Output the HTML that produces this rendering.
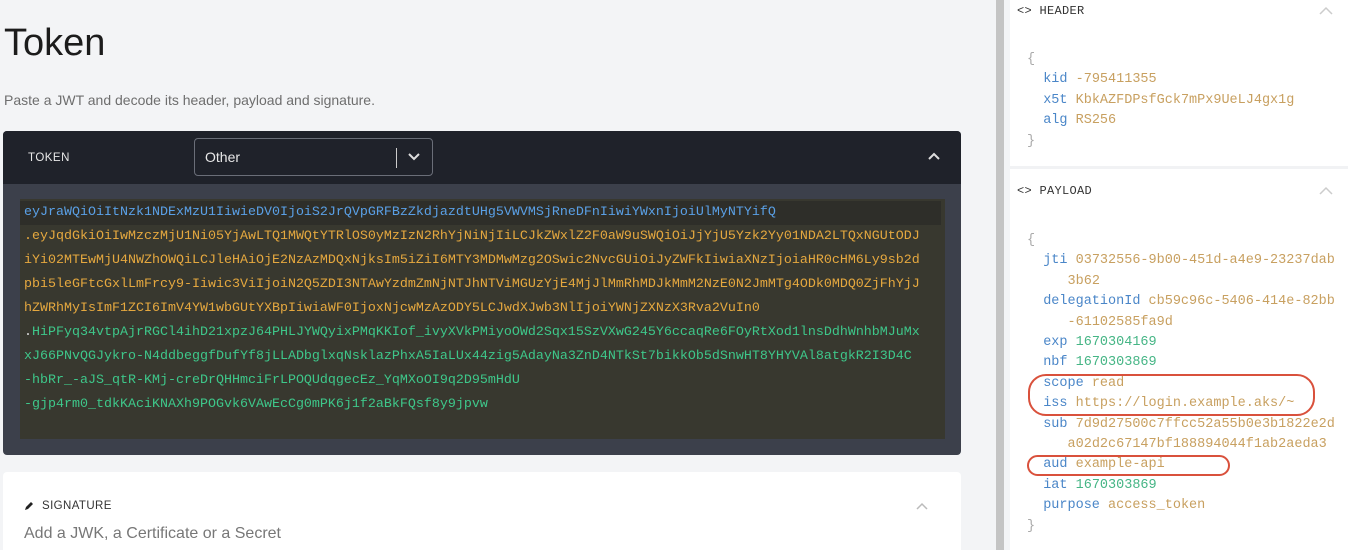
<!DOCTYPE html>
<html style="overflow:hidden;height:550px"><head><meta charset="utf-8"><style>
*{box-sizing:border-box;margin:0;padding:0}
body{width:1348px;height:550px;overflow:hidden;background:#f3f4f6;font-family:"Liberation Sans",sans-serif;position:relative}
.mono{font-family:"Liberation Mono",monospace}
h1{position:absolute;left:4px;top:22px;font-size:38px;font-weight:400;color:#1c1c1c}
.sub{position:absolute;left:4px;top:92px;font-size:14px;color:#6e6e6e}
.card{position:absolute;left:3px;top:131px;width:958px;height:324px;background:#3c404b;border-radius:4px;overflow:hidden}
.chead{height:53px;background:#1f222a;position:relative}
.lbl{position:absolute;left:25px;top:21px;font-size:11.5px;color:#e8e8e8;letter-spacing:.5px}
.sel{position:absolute;left:191px;top:7px;width:239px;height:38px;border:1px solid #6a6e78;border-radius:4px;color:#e8e8e8;font-size:14px;padding:10px 10px}
.sel .bar{position:absolute;left:201px;top:9px;width:1px;height:20px;background:#ccc}
.ta{position:absolute;left:17px;top:68px;width:925px;height:240px;background:#38382f}
.line{position:absolute;left:4px;font-size:13.33px;white-space:nowrap;height:24px;line-height:24px}
.b{color:#5aa0e6}.o{color:#e5a83f}.g{color:#3ec78a}
.sig{position:absolute;left:3px;top:472px;width:958px;height:78px;background:#fff;border-radius:4px 4px 0 0}
.rp{position:absolute;left:1010px;top:0;width:338px;height:550px;background:#fff}
.sb{position:absolute;left:996px;top:0;width:8px;height:550px;background:#c4c4c4}
.sbt{position:absolute;left:988px;top:0;width:22px;height:550px;background:#f3f4f6}
.ttl{position:absolute;font-size:12px;color:#333;letter-spacing:.3px}
.json{position:absolute;left:1027px;font-size:13.5px;line-height:20.4px;white-space:pre;color:#aaa}
.k{color:#4a86c8}.v{color:#c8a060}.n{color:#45b585}
.oval{position:absolute;border:2px solid #d9513c;border-radius:18px}
</style></head><body>
<h1>Token</h1>
<div class="sub">Paste a JWT and decode its header, payload and signature.</div>
<div class="card">
 <div class="chead"><div class="lbl">TOKEN</div>
  <div class="sel">Other<div class="bar"></div>
   <svg style="position:absolute;left:212px;top:13px" width="14" height="10" viewBox="0 0 14 10"><path d="M2 2l5 5 5-5" stroke="#ddd" stroke-width="2" fill="none"/></svg></div>
  <svg style="position:absolute;left:924px;top:20px" width="14" height="10" viewBox="0 0 14 10"><path d="M2 8l5-5 5 5" stroke="#ddd" stroke-width="2" fill="none"/></svg>
 </div>
 <div class="ta mono">
  <div class="line b" style="top:2px;background:#2e2e29;width:921px;left:0;padding-left:4px">eyJraWQiOiItNzk1NDExMzU1IiwieDV0IjoiS2JrQVpGRFBzZkdjazdtUHg5VWVMSjRneDFnIiwiYWxnIjoiUlMyNTYifQ</div>
  <div class="line o" style="top:26px">.eyJqdGkiOiIwMzczMjU1Ni05YjAwLTQ1MWQtYTRlOS0yMzIzN2RhYjNiNjIiLCJkZWxlZ2F0aW9uSWQiOiJjYjU5Yzk2Yy01NDA2LTQxNGUtODJ</div>
  <div class="line o" style="top:50px">iYi02MTEwMjU4NWZhOWQiLCJleHAiOjE2NzAzMDQxNjksIm5iZiI6MTY3MDMwMzg2OSwic2NvcGUiOiJyZWFkIiwiaXNzIjoiaHR0cHM6Ly9sb2d</div>
  <div class="line o" style="top:74px">pbi5leGFtcGxlLmFrcy9-Iiwic3ViIjoiN2Q5ZDI3NTAwYzdmZmNjNTJhNTViMGUzYjE4MjJlMmRhMDJkMmM2NzE0N2JmMTg4ODk0MDQ0ZjFhYjJ</div>
  <div class="line o" style="top:98px">hZWRhMyIsImF1ZCI6ImV4YW1wbGUtYXBpIiwiaWF0IjoxNjcwMzAzODY5LCJwdXJwb3NlIjoiYWNjZXNzX3Rva2VuIn0</div>
  <div class="line g" style="top:122px"><span style="color:#ddd">.</span>HiPFyq34vtpAjrRGCl4ihD21xpzJ64PHLJYWQyixPMqKKIof_ivyXVkPMiyoOWd2Sqx15SzVXwG245Y6ccaqRe6FOyRtXod1lnsDdhWnhbMJuMx</div>
  <div class="line g" style="top:146px">xJ66PNvQGJykro-N4ddbeggfDufYf8jLLADbglxqNsklazPhxA5IaLUx44zig5AdayNa3ZnD4NTkSt7bikkOb5dSnwHT8YHYVAl8atgkR2I3D4C</div>
  <div class="line g" style="top:170px">-hbRr_-aJS_qtR-KMj-creDrQHHmciFrLPOQUdqgecEz_YqMXoOI9q2D95mHdU</div>
  <div class="line g" style="top:194px">-gjp4rm0_tdkKAciKNAXh9POGvk6VAwEcCg0mPK6j1f2aBkFQsf8y9jpvw</div>
 </div>
</div>
<div class="sig">
 <svg style="position:absolute;left:20px;top:28px" width="12" height="12" viewBox="0 0 12 12"><path d="M2 10l1-3 5-5 2 2-5 5z" fill="#222"/></svg>
 <div style="position:absolute;left:39px;top:28px;font-size:11.5px;color:#333;letter-spacing:.4px">SIGNATURE</div>
 <svg style="position:absolute;left:912px;top:29px" width="14" height="10" viewBox="0 0 14 10"><path d="M2 8l5-5 5 5" stroke="#bbb" stroke-width="1.5" fill="none"/></svg>
 <div style="position:absolute;left:21px;top:53px;font-size:16px;color:#777">Add a JWK, a Certificate or a Secret</div>
</div>
<div class="sbt"></div><div class="sb"></div>
<div class="rp">
 <div style="position:absolute;left:0;top:166px;width:338px;height:3px;background:#f1f2f4"></div>
</div>
<div class="ttl mono" style="left:1017px;top:4px">&lt;&gt; HEADER</div>
<div class="ttl mono" style="left:1017px;top:184px">&lt;&gt; PAYLOAD</div>
<svg style="position:absolute;left:1318px;top:6px" width="16" height="10" viewBox="0 0 16 10"><path d="M2 8l6-6 6 6" stroke="#ccc" stroke-width="1.5" fill="none"/></svg>
<svg style="position:absolute;left:1318px;top:186px" width="16" height="10" viewBox="0 0 16 10"><path d="M2 8l6-6 6 6" stroke="#ccc" stroke-width="1.5" fill="none"/></svg>
<div class="json mono" style="top:50px">{
  <span class="k">kid</span> <span class="v">-795411355</span>
  <span class="k">x5t</span> <span class="v">KbkAZFDPsfGck7mPx9UeLJ4gx1g</span>
  <span class="k">alg</span> <span class="v">RS256</span>
}</div>
<div class="json mono" style="top:231px">{
  <span class="k">jti</span> <span class="v">03732556-9b00-451d-a4e9-23237dab</span>
     <span class="v">3b62</span>
  <span class="k">delegationId</span> <span class="v">cb59c96c-5406-414e-82bb</span>
     <span class="v">-61102585fa9d</span>
  <span class="k">exp</span> <span class="n">1670304169</span>
  <span class="k">nbf</span> <span class="n">1670303869</span>
  <span class="k">scope</span> <span class="v">read</span>
  <span class="k">iss</span> <span class="v">https://login.example.aks/~</span>
  <span class="k">sub</span> <span class="v">7d9d27500c7ffcc52a55b0e3b1822e2d</span>
     <span class="v">a02d2c67147bf188894044f1ab2aeda3</span>
  <span class="k">aud</span> <span class="v">example-api</span>
  <span class="k">iat</span> <span class="n">1670303869</span>
  <span class="k">purpose</span> <span class="v">access_token</span>
}</div>
<div class="oval" style="left:1028px;top:374px;width:287px;height:42px"></div>
<div class="oval" style="left:1027px;top:455px;width:203px;height:21px;border-radius:11px"></div>
</body></html>
